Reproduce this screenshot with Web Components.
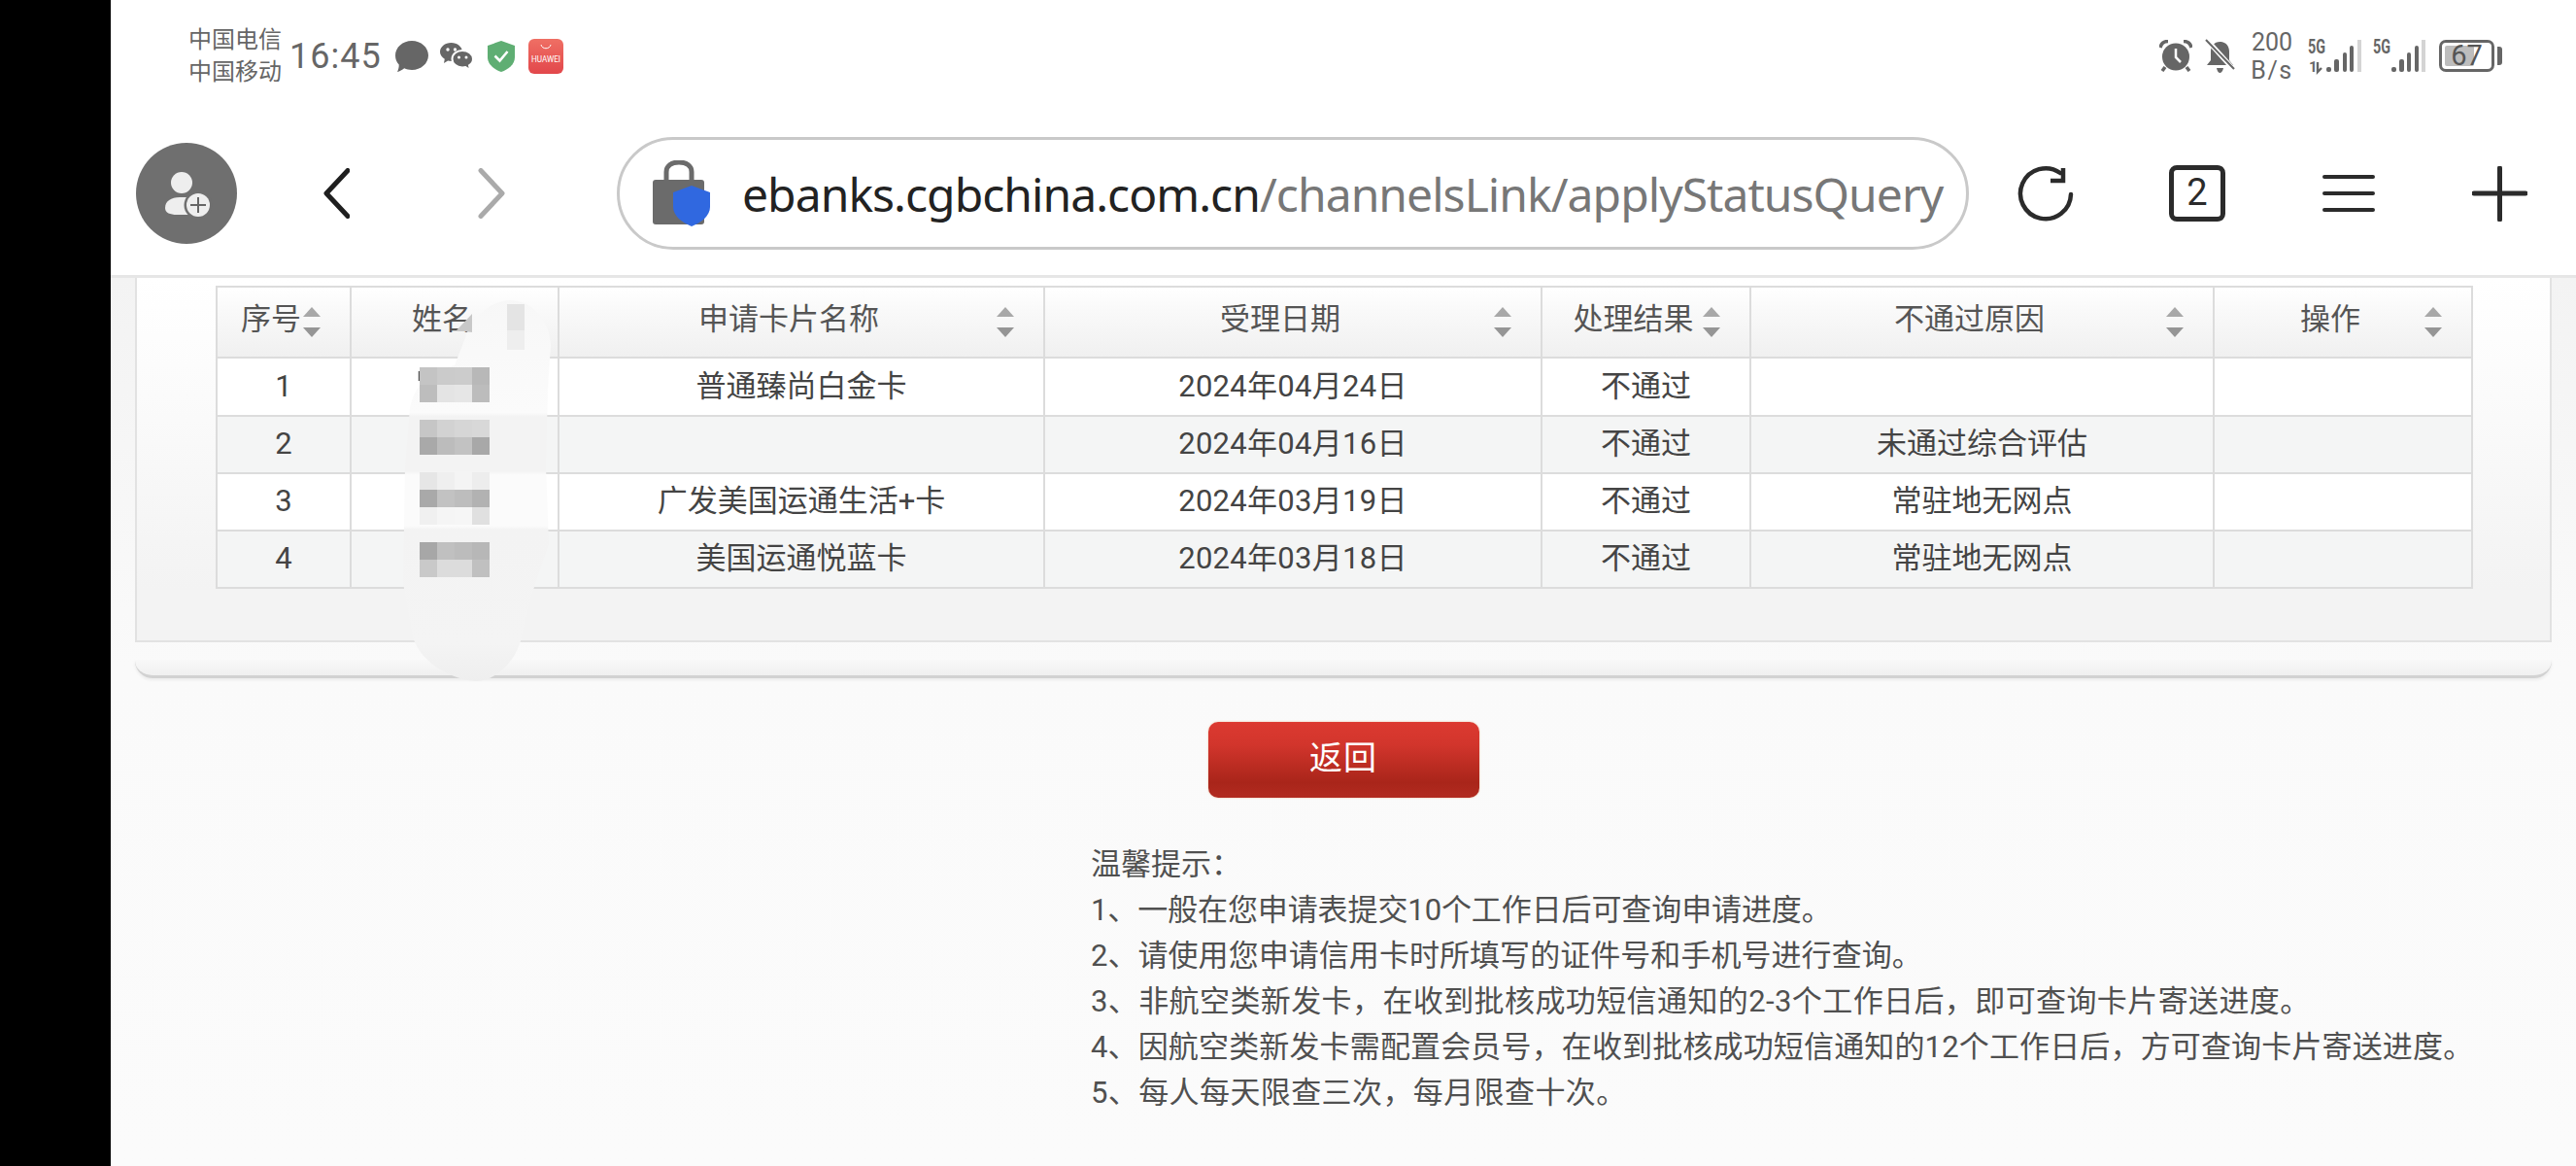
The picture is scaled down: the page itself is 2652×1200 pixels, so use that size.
<!DOCTYPE html>
<html lang="zh">
<head>
<meta charset="utf-8">
<title>applyStatusQuery</title>
<style>
  html, body { margin: 0; padding: 0; background: #000; }
  body {
    width: 2652px;
    height: 1200px;
    overflow: hidden;
    font-family: Roboto, "Noto Sans CJK SC", sans-serif;
  }
  #phone { display: flex; flex-direction: column; height: 1200px; margin-left: 114px; background: #fff; position: relative; }
</style>
</head>
<body>
<div id="phone">
  <status-bar></status-bar>
  <browser-toolbar host-part="ebanks.cgbchina.com.cn" path-part="/channelsLink/applyStatusQuery" tabs="2"></browser-toolbar>
  <query-page>
    <result-panel></result-panel>
    <return-button>返回</return-button>
    <tips-list>
      <div>温馨提示：</div>
      <div style="letter-spacing:-.1px">1、一般在您申请表提交10个工作日后可查询申请进度。</div>
      <div style="letter-spacing:.05px">2、请使用您申请信用卡时所填写的证件号和手机号进行查询。</div>
      <div style="letter-spacing:.4px">3、非航空类新发卡，在收到批核成功短信通知的2-3个工作日后，即可查询卡片寄送进度。</div>
      <div style="letter-spacing:.15px">4、因航空类新发卡需配置会员号，在收到批核成功短信通知的12个工作日后，方可查询卡片寄送进度。</div>
      <div style="letter-spacing:.4px">5、每人每天限查三次，每月限查十次。</div>
    </tips-list>
    <name-smudge></name-smudge>
  </query-page>
</div>

<script>
// phone status bar
class StatusBar extends HTMLElement {
  constructor() {
    super();
    const shadowRoot = this.attachShadow({ mode: 'open' });
    shadowRoot.innerHTML = `
      <style>
        :host {
          display: flex;
          align-items: center;
          height: 115px;
          padding: 0 76px 0 80px;
          box-sizing: border-box;
          color: #666;
          font-family: Roboto, "Noto Sans CJK SC", sans-serif;
          flex: none;
        }
        .carrier { font-size: 24px; line-height: 33px; width: 104px; white-space: nowrap; }
        .time { font-size: 36px; letter-spacing: 1px; width: 104px; line-height: 1; padding-left: 0; }
        svg { display: block; flex: none; }
        .spacer { flex: 1; }
        .speed { font-size: 25px; line-height: 29px; text-align: center; width: 46px; margin: 0 14px 0 15px; }
        .speed span { letter-spacing: 1.5px; }
        .battery {
          width: 57px; height: 33px; box-sizing: border-box;
          border: 3.5px solid #666; border-radius: 7px;
          margin-left: 14px; padding: 3px;
          display: flex; position: relative;
        }
        .battery i { display: block; width: 67%; background: #bdbdbd; border-radius: 2px; }
        .battery span {
          position: absolute; inset: 0; text-align: center;
          font-size: 29px; line-height: 26px; color: #555;
        }
        .nub { width: 5px; height: 19px; background: #666; border-radius: 0 3px 3px 0; margin-left: 3px; }
      </style>
      <div class="carrier">中国电信<br>中国移动</div>
      <div class="time">16:45</div>
      <svg width="34" height="32" viewBox="0 0 34 32" style="margin-left:5px"><path fill="#666" d="M17 0C26.400 0 34 6.700 34 15S26.400 30 17 30C14 30 11.500 29.400 9.200 28.300C7 30 4.500 31.500 2 32C3.200 29.500 3.800 27 3.700 24.500C1.300 22 0 18.700 0 15C0 6.700 7.600 0 17 0Z"/></svg>
      <svg width="34" height="28" viewBox="0 0 34 28" style="margin-left:12px">
        <path fill="#666" d="M11.500 0C17.800 0 23 4.200 23 9.500C23 14.800 17.800 19 11.500 19C10.300 19 9.200 18.900 8.100 18.600L4 21L4.800 16.700C2 15 0 12.400 0 9.500C0 4.200 5.100 0 11.500 0Z"/>
        <path fill="#666" stroke="#fff" stroke-width="2" d="M23 8C29 8 34 11.900 34 16.700C34 19.400 32.400 21.800 30 23.300L31 28L26.300 25C25.300 25.300 24.200 25.400 23 25.400C17 25.400 12.500 21.500 12.500 16.700C12.500 11.900 17 8 23 8Z"/>
        <circle cx="8" cy="7" r="1.700" fill="#fff"/><circle cx="15.500" cy="7" r="1.700" fill="#fff"/>
        <circle cx="19.500" cy="15" r="1.500" fill="#fff"/><circle cx="27" cy="15" r="1.500" fill="#fff"/>
      </svg>
      <svg width="28" height="32" viewBox="0 0 28 32" style="margin-left:15px"><path fill="#5fae73" d="M14 0L28 5V17C28 24 21.500 29.500 14 32C6.500 29.500 0 24 0 17V5Z"/><path fill="none" stroke="#fff" stroke-width="2.600" d="M7.500 15.500L12.500 20.500L20.500 11"/></svg>
      <svg width="36" height="36" viewBox="0 0 36 36" style="margin-left:14px">
        <defs><linearGradient id="hw" x1="0" y1="0" x2="0" y2="1"><stop offset="0" stop-color="#ef6f64"/><stop offset="1" stop-color="#e2474b"/></linearGradient></defs>
        <rect width="36" height="36" rx="6" fill="url(#hw)"/>
        <path d="M13 6C14 11 22 11 23 6" fill="none" stroke="#fff" stroke-width="1"/>
        <text x="18" y="24" font-size="9" fill="#fff" text-anchor="middle" font-family="Roboto" textLength="30" lengthAdjust="spacingAndGlyphs">HUAWEI</text>
      </svg>
      <div class="spacer"></div>
      <svg width="34" height="33" viewBox="0 0 34 33">
        <circle cx="17" cy="17.500" r="14" fill="#666"/>
        <path d="M1 8C2 3.500 5 1.500 9 1.500M33 8C32 3.500 29 1.500 25 1.500" fill="none" stroke="#666" stroke-width="3.500"/>
        <path d="M6 28L3 32M28 28L31 32" stroke="#666" stroke-width="3.500"/>
        <path d="M17 9V18L22 23" fill="none" stroke="#fff" stroke-width="2.500"/>
      </svg>
      <svg width="31" height="35" viewBox="0 0 31 35" style="margin-left:13px">
        <path fill="#666" d="M15.500 3C21.500 3 25 7.500 25 13V22L29 27H2L6 22V13C6 7.500 9.500 3 15.500 3Z"/>
        <path fill="#666" d="M12 30H19C18.500 33 17 35 15.500 35S12.500 33 12 30Z"/>
        <path d="M1 0L30 32" stroke="#fff" stroke-width="5"/>
        <path d="M1 1L30 31" stroke="#666" stroke-width="2"/>
      </svg>
      <div class="speed">200<br><span>B/s</span></div>
      <svg width="55" height="56" viewBox="0 -10 55 56">
        <text x="0" y="15" font-size="21" font-weight="700" fill="#666" font-family="Roboto" textLength="18" lengthAdjust="spacingAndGlyphs">5G</text>
        <text x="1" y="34" font-size="15" font-weight="700" fill="#666" font-family="Roboto">1</text>
        <path d="M10 24V34L14 30" fill="none" stroke="#666" stroke-width="2.400"/>
        <g fill="#666"><rect x="19" y="29" width="5" height="5" rx="2"/><rect x="27" y="21" width="5" height="13" rx="2"/><rect x="36" y="14" width="4" height="20" rx="2"/><rect x="43" y="7" width="4" height="27" rx="2"/></g>
        <rect x="51" y="1" width="4" height="33" fill="#d4d4d4"/>
      </svg>
      <svg width="55" height="56" viewBox="0 -10 55 56" style="margin-left:11px">
        <text x="1" y="15" font-size="21" font-weight="700" fill="#666" font-family="Roboto" textLength="18" lengthAdjust="spacingAndGlyphs">5G</text>
        <g fill="#666"><rect x="20" y="29" width="5" height="5" rx="2"/><rect x="28" y="21" width="5" height="13" rx="2"/><rect x="36" y="14" width="4" height="20" rx="2"/><rect x="44" y="7" width="4" height="27" rx="2"/></g>
        <rect x="51" y="1" width="4" height="33" fill="#d4d4d4"/>
      </svg>
      <div class="battery"><i></i><span>67</span></div>
      <div class="nub"></div>
    `;
  }
}
customElements.define('status-bar', StatusBar);

// browser chrome with the address bar
class BrowserToolbar extends HTMLElement {
  constructor() {
    super();
    const shadowRoot = this.attachShadow({ mode: 'open' });
    shadowRoot.innerHTML = `
      <style>
        :host {
          display: flex;
          align-items: center;
          height: 171px;
          box-sizing: border-box;
          border-bottom: 3px solid #e6e6e6;
          padding-left: 26px;
          flex: none;
          background: #fff;
        }
        svg { display: block; flex: none; }
        .pill {
          width: 1392px; height: 116px; box-sizing: border-box;
          margin-left: 115px;
          border: 3px solid #c9c9c9; border-radius: 58px;
          display: flex; align-items: center;
          padding-left: 34px; flex: none;
          overflow: hidden;
        }
        .url {
          margin-left: 32px;
          font-family: "Noto Sans", sans-serif;
          font-size: 48px;
          white-space: nowrap;
          color: #222;
          letter-spacing: -.95px;
        }
        .url span { color: #777; }
        .tabs {
          width: 58px; height: 58px; box-sizing: border-box;
          border: 5px solid #2b2b2b; border-radius: 8px;
          margin-left: 98px; flex: none;
          text-align: center; font-size: 38px; line-height: 47px; color: #2b2b2b;
          font-family: Roboto, sans-serif;
        }
      </style>
      <svg width="104" height="104" viewBox="0 0 104 104">
        <circle cx="52" cy="52" r="52" fill="#6f6f6f"/>
        <circle cx="47" cy="41" r="11" fill="#eee"/>
        <path fill="#eee" d="M30 67C30 60 36 56 45 56H58V74H42C35 74 30 72 30 67Z"/>
        <circle cx="64" cy="64" r="14.500" fill="#6f6f6f"/>
        <circle cx="64" cy="64" r="12" fill="#eee"/>
        <path d="M64 56V72M56 64H72" stroke="#666" stroke-width="2"/>
      </svg>
      <svg width="27" height="52" viewBox="0 0 27 52" style="margin-left:89px"><path d="M25 2.500L3 26L25 49.500" fill="none" stroke="#1f1f1f" stroke-width="5" stroke-linecap="round" stroke-linejoin="round"/></svg>
      <svg width="28" height="52" viewBox="0 0 28 52" style="margin-left:132px"><path d="M3 2.500L25 26L3 49.500" fill="none" stroke="#aaa" stroke-width="5" stroke-linecap="round" stroke-linejoin="round"/></svg>
      <div class="pill">
        <svg width="60" height="68" viewBox="0 0 60 68">
          <path d="M14 22V12C14 6 19 2 27 2S40 6 40 12V22" fill="none" stroke="#6b6b6b" stroke-width="5"/>
          <rect x="0" y="20" width="53" height="46" rx="3" fill="#6b6b6b"/>
          <path fill="#3068e0" d="M40 26L59 33V48C59 57 50 64 40 68C30 64 21 57 21 48V33Z"/>
        </svg>
        <div class="url">${this.getAttribute('host-part')}<span>${this.getAttribute('path-part')}</span></div>
      </div>
      <svg width="58" height="58" viewBox="0 0 58 58" style="margin-left:50px">
        <path d="M55 30A26 26 0 1 1 44 8" fill="none" stroke="#2b2b2b" stroke-width="4.500" stroke-linecap="round"/>
        <path d="M47 3V16H34" fill="none" stroke="#2b2b2b" stroke-width="4.500"/>
      </svg>
      <div class="tabs">${this.getAttribute('tabs')}</div>
      <svg width="54" height="40" viewBox="0 0 54 40" style="margin-left:100px"><path d="M2 3H52M2 20H52M2 37H52" stroke="#2b2b2b" stroke-width="4" stroke-linecap="round"/></svg>
      <svg width="57" height="57" viewBox="0 0 57 57" style="margin-left:100px"><path d="M28.500 2V55M2 28H55" stroke="#2b2b2b" stroke-width="5" stroke-linecap="round"/></svg>
    `;
  }
}
customElements.define('browser-toolbar', BrowserToolbar);

// page under the toolbar
class QueryPage extends HTMLElement {
  constructor() {
    super();
    const shadowRoot = this.attachShadow({ mode: 'open' });
    shadowRoot.innerHTML = `
      <style>
        :host {
          display: flex;
          flex-direction: column;
          flex: 1;
          position: relative;
          background: linear-gradient(#f3f3f3 0, #fafafa 400px, #fbfbfb 100%);
          font-family: Roboto, "Noto Sans CJK SC", sans-serif;
        }
      </style>
      <slot></slot>
    `;
  }
}
customElements.define('query-page', QueryPage);

// the result table inside its panel
class ResultPanel extends HTMLElement {
  constructor() {
    super();
    const shadowRoot = this.attachShadow({ mode: 'open' });
    const heads = ['序号', '姓名', '申请卡片名称', '受理日期', '处理结果', '不通过原因', '操作'];
    const rows = [
      ['1', '', '普通臻尚白金卡', '2024年04月24日', '不通过', ''],
      ['2', '', '', '2024年04月16日', '不通过', '未通过综合评估'],
      ['3', '', '广发美国运通生活+卡', '2024年03月19日', '不通过', '常驻地无网点'],
      ['4', '', '美国运通悦蓝卡', '2024年03月18日', '不通过', '常驻地无网点']
    ];
    const sorter = `<svg width="18" height="31" viewBox="0 0 18 31"><path fill="#a8a8a8" d="M9 0L18 10H0Z"/><path fill="#959595" d="M0 21H18L9 31Z"/></svg>`;
    shadowRoot.innerHTML = `
      <style>
        :host { display: block; margin: 0 25px; flex: none; }
        .box {
          border: solid #e2e2e2; border-width: 0 2px 2px;
          padding: 8px 0 53px 81px;
          background: linear-gradient(#fff 0, #fbfbfb 120px, #f3f3f3 320px);
        }
        table { border-collapse: collapse; table-layout: fixed; width: 2322px; font-size: 31px; color: #444; }
        th, td { border: 2px solid #dcdcdc; padding: 0; text-align: center; font-weight: 400; box-sizing: border-box; }
        th {
          height: 73px; color: #555; line-height: 1;
          background: linear-gradient(#fff 0, #f9f9f9 35%, #f0f0f0 100%);
        }
        td { height: 59px; line-height: 1; padding-bottom: 2px; }
        td:nth-child(4) { letter-spacing: .3px; }
        tr:nth-child(odd) td { background: #fff; }
        tr:nth-child(even) td { background: #f4f5f5; }
        tbody tr:first-child td { height: 60px; }
        .head { display: flex; align-items: center; padding-right: 30px; }
        .head span { flex: 1; padding-left: 22px; margin-top: -6px; }
        svg { display: block; flex: none; }
        .strip {
          height: 16px; margin-top: 18px;
          border-bottom: 3px solid #d2d2d2;
          border-radius: 0 0 18px 18px;
          background: linear-gradient(#f8f8f8, #f0f0f0);
          box-shadow: 0 2px 3px #ececec;
        }
      </style>
      <div class="box">
        <table>
          <colgroup><col style="width:138px"><col style="width:214px"><col style="width:500px"><col style="width:512px"><col style="width:215px"><col style="width:477px"><col style="width:266px"></colgroup>
          <thead><tr>${heads.map(h => `<th><div class="head"><span>${h}</span>${sorter}</div></th>`).join('')}</tr></thead>
          <tbody>${rows.map(r => `<tr>${r.map(c => `<td>${c}</td>`).join('')}<td></td></tr>`).join('')}</tbody>
        </table>
      </div>
      <div class="strip"></div>
    `;
  }
}
customElements.define('result-panel', ResultPanel);

class ReturnButton extends HTMLElement {
  constructor() {
    super();
    const shadowRoot = this.attachShadow({ mode: 'open' });
    shadowRoot.innerHTML = `
      <style>
        :host {
          display: flex;
          align-items: center;
          justify-content: center;
          align-self: center;
          flex: none;
          box-sizing: border-box;
          width: 279px;
          height: 78px;
          margin-top: 45px;
          padding-bottom: 10px;
          border-radius: 10px;
          color: #fff;
          font-size: 34px;
          letter-spacing: 1px;
          background: linear-gradient(#dc3a31 0, #d2352c 30%, #a9251a 80%, #b22b20 100%);
          box-shadow: 0 0 2px #e8b48c;
        }
      </style>
      <slot></slot>
    `;
  }
}
customElements.define('return-button', ReturnButton);

class TipsList extends HTMLElement {
  constructor() {
    super();
    const shadowRoot = this.attachShadow({ mode: 'open' });
    shadowRoot.innerHTML = `
      <style>
        :host {
          display: block;
          flex: none;
          margin: 45px 0 0 1009px;
          font-size: 31px;
          line-height: 47px;
          color: #505050;
          white-space: nowrap;
        }
      </style>
      <slot></slot>
    `;
  }
}
customElements.define('tips-list', TipsList);

// the blur someone painted over the name column
class NameSmudge extends HTMLElement {
  constructor() {
    super();
    const shadowRoot = this.attachShadow({ mode: 'open' });
    const cells = [
      [378, ['#c4c4c4', '#cbcbcb', '#cccccc', '#b8b8b8']],
      [396, ['#bdbdbd', '#e4e4e4', '#e6e6e6', '#bcbcbc']],
      [432, ['#c6c6c6', '#d2d2d2', '#d6d6d6', '#d8d8d8']],
      [450, ['#a9a9a9', '#bcbcbc', '#c2c2c2', '#a8a8a8']],
      [486, ['#e6e6e6', '#efefef', '#f4f4f4', '#ededed']],
      [504, ['#a9a9a9', '#c2c2c2', '#bdbdbd', '#b2b2b2']],
      [522, ['#f0f0f0', '#f5f5f5', '#f6f6f6', '#e0e0e0']],
      [558, ['#a7a7a7', '#c0c0c0', '#bcbcbc', '#b7b7b7']],
      [576, ['#c9c9c9', '#dcdcdc', '#dcdcdc', '#c0c0c0']]
    ];
    const rects = cells.map(c => c[1].map((col, i) =>
      `<rect x="${432 + i * 18}" y="${c[0]}" width="18" height="18" fill="${col}"/>`).join('')).join('');
    shadowRoot.innerHTML = `
      <style>
        :host { position: absolute; left: 286px; top: 14px; width: 190px; height: 402px; display: block; }
        svg { display: block; }
      </style>
      <svg width="190" height="402" viewBox="400 300 190 402">
        <defs>
          <linearGradient id="smear" gradientUnits="userSpaceOnUse" x1="0" y1="300" x2="0" y2="702">
            <stop offset="0" stop-color="#f7f7f7"/>
            <stop offset="0.31" stop-color="#fbfbfb"/>
            <stop offset="0.32" stop-color="#f3f3f3"/>
            <stop offset="0.46" stop-color="#f3f3f3"/>
            <stop offset="0.47" stop-color="#fbfbfb"/>
            <stop offset="0.6" stop-color="#fbfbfb"/>
            <stop offset="0.61" stop-color="#f3f3f3"/>
            <stop offset="0.9" stop-color="#f4f4f4"/>
            <stop offset="1" stop-color="#eeeeee"/>
          </linearGradient>
        </defs>
        <path fill="url(#smear)" d="M482 340C490 322 510 309 525 309C548 309 566 330 567 355L564 400L562 480L565 560L548 610L538 650C534 680 510 701 490 701C465 700 428 680 424 650L415 600L417 480L422 420C428 390 450 380 468 376Z"/>
        <path d="M432 382V392M432 382H446" stroke="#555" stroke-width="2.500" fill="none"/>
        <path d="M470 340L486 323V342Z" fill="#c8c8c8"/>
        <rect x="522" y="313" width="18" height="27" fill="#e4e4e4"/>
        <rect x="522" y="340" width="18" height="20" fill="#eeeeee"/>
        ${rects}
      </svg>
    `;
  }
}
customElements.define('name-smudge', NameSmudge);
</script>
</body>
</html>
